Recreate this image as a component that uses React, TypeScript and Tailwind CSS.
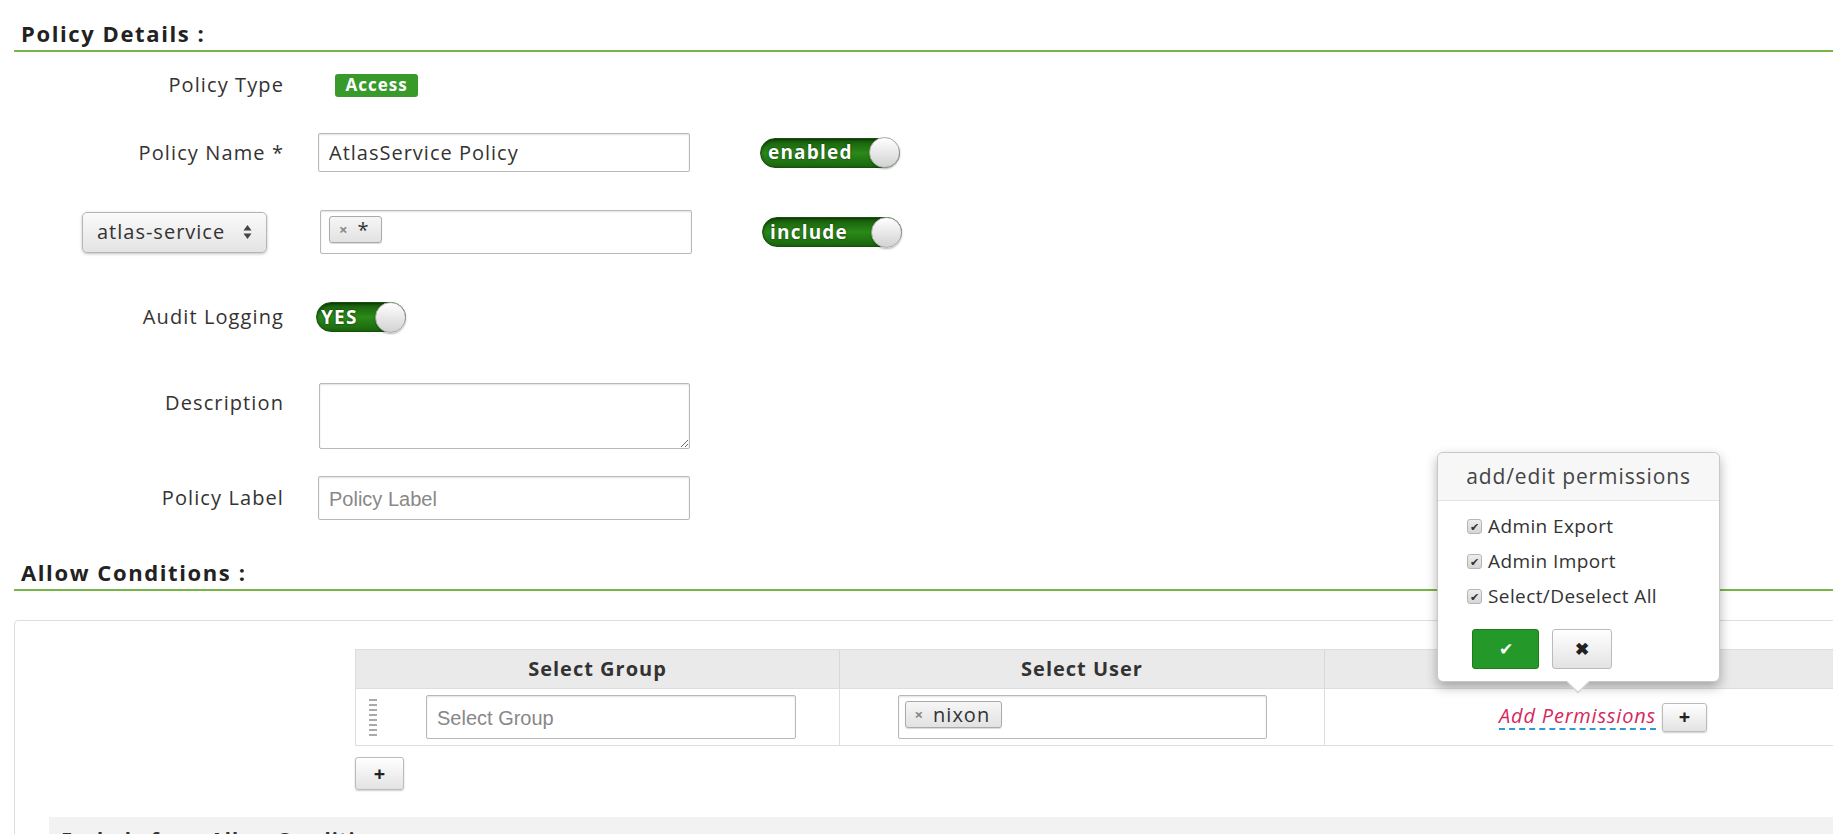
import React from "react";

const Toggle = ({ label, className }: { label: string; className: string }) => (
  <div
    className={`flex h-[30px] items-center justify-between rounded-full border border-[#15520b] bg-linear-to-b from-[#175a0b] via-[#2a8a18] to-[#1b660e] pl-[7px] shadow-[inset_0_1px_3px_rgba(0,0,0,0.5)] ${className}`}
  >
    <span className="text-[19px] font-bold leading-none tracking-[1.2px] text-white [text-shadow:0_0_2px_rgba(0,0,0,0.7)]">
      {label}
    </span>
    <span className="-mr-px h-[31px] w-[31px] rounded-full border border-[#a9a9a9] bg-linear-to-b from-white to-[#d2d2d2] shadow-[0_1px_2px_rgba(0,0,0,0.3)]" />
  </div>
);

const Tag = ({ text }: { text: string }) => (
  <span className="inline-flex h-[27px] items-center gap-[9px] rounded-[3px] border border-[#aaa] bg-linear-to-b from-[#f6f6f6] to-[#e2e2e2] pl-[9px] pr-[11px] text-[20px] leading-none tracking-[1px] text-[#333] shadow-[0_1px_1px_rgba(0,0,0,0.15)]">
    <span className="text-[15px] font-bold text-[#888]">×</span>
    {text}
  </span>
);

const PlusButton = ({ className }: { className: string }) => (
  <button
    className={`flex items-center justify-center rounded-[3px] border border-[#bbb] bg-linear-to-b from-white to-[#e3e3e3] text-[20px] font-bold leading-none text-[#222] shadow-[0_1px_2px_rgba(0,0,0,0.2)] ${className}`}
  >
    +
  </button>
);

const Check = () => (
  <span className="flex h-[15px] w-[15px] shrink-0 items-center justify-center rounded-[3px] border border-[#b5b5b5] bg-linear-to-b from-[#eee] to-[#d5d5d5] text-[11px] leading-none text-[#333]">
    ✔
  </span>
);

const Label = ({ children }: { children: React.ReactNode }) => (
  <div className="w-[284px] shrink-0 text-right text-[20px] leading-[28px] tracking-[1.1px] text-[#333]">
    {children}
  </div>
);

const SectionTitle = ({ children, className }: { children: React.ReactNode; className: string }) => (
  <div
    className={`ml-[14px] h-[52px] border-b-2 border-[#78b547] pl-[7px] pt-[19px] text-[22px] font-bold leading-[28px] tracking-[1.6px] text-[#222] ${className}`}
  >
    {children}
  </div>
);

const inputCls =
  "rounded-[2px] border border-[#b9b9b9] bg-white px-[10px] text-[20px] tracking-[1px] text-[#333] shadow-[inset_0_1px_2px_rgba(0,0,0,0.12)] outline-none placeholder:font-['Liberation_Sans',sans-serif] placeholder:tracking-normal placeholder:text-[#888]";

export default function App() {
  return (
    <div className="relative h-[834px] w-[1833px] overflow-hidden bg-white font-['Open_Sans','Noto_Sans',sans-serif] text-[#333]">
      <SectionTitle className="mt-0">Policy Details :</SectionTitle>

      {/* Policy Type */}
      <div className="mt-[22px] flex h-[22px] items-center">
        <Label>Policy Type</Label>
        <span className="ml-[51px] flex h-[23px] w-[83px] items-center justify-center rounded-[3px] bg-[#379a2b] text-[17px] font-bold tracking-[1px] text-white">
          Access
        </span>
      </div>

      {/* Policy Name */}
      <div className="mt-[37px] flex h-[39px] items-center">
        <Label>Policy Name *</Label>
        <input readOnly value="AtlasService Policy" className={`ml-[34px] h-[39px] w-[372px] ${inputCls}`} />
        <Toggle label="enabled" className="ml-[70px] w-[140px]" />
      </div>

      {/* Service select */}
      <div className="mt-[38px] flex h-[44px] items-center">
        <div className="flex w-[284px] shrink-0 justify-end pr-[17px]">
          <div className="flex h-[41px] w-[185px] items-center justify-between rounded-[5px] border border-[#b5b5b5] bg-linear-to-b from-[#fafafa] to-[#e4e4e4] pl-[14px] pr-[14px] text-[20px] tracking-[1px] text-[#333] shadow-[0_1px_3px_rgba(0,0,0,0.25)]">
            atlas-service
            <svg width="9" height="16" viewBox="0 0 9 16">
              <path d="M4.5 1 L8.5 6.5 L0.5 6.5 Z" fill="#444" />
              <path d="M4.5 15 L8.5 9.5 L0.5 9.5 Z" fill="#444" />
            </svg>
          </div>
        </div>
        <div className="ml-[36px] flex h-[44px] w-[372px] items-start rounded-[2px] border border-[#b9b9b9] bg-white pl-[8px] pt-[5px] shadow-[inset_0_1px_2px_rgba(0,0,0,0.12)]">
          <Tag text="*" />
        </div>
        <Toggle label="include" className="ml-[70px] w-[140px]" />
      </div>

      {/* Audit Logging */}
      <div className="mt-[48px] flex h-[30px] items-center">
        <Label>Audit Logging</Label>
        <Toggle label="YES" className="ml-[32px] w-[90px] !pl-[4px]" />
      </div>

      {/* Description */}
      <div className="mt-[51px] flex h-[66px] items-start">
        <div className="pt-[6px]">
          <Label>Description</Label>
        </div>
        <textarea readOnly className={`ml-[35px] h-[66px] w-[371px] resize ${inputCls}`} />
      </div>

      {/* Policy Label */}
      <div className="mt-[27px] flex h-[44px] items-center">
        <Label>Policy Label</Label>
        <input readOnly placeholder="Policy Label" className={`ml-[34px] h-[44px] w-[372px] ${inputCls}`} />
      </div>

      <SectionTitle className="mt-[19px]">Allow Conditions :</SectionTitle>

      {/* Allow conditions panel */}
      <div className="ml-[14px] mt-[29px] w-[1900px] rounded-[4px] border border-[#ddd] pb-[40px] pl-[340px] pt-[28px]">
        <div className="w-[1525px] border-b border-l border-t border-[#ddd]">
          <div className="grid h-[38px] grid-cols-[484px_485px_556px] bg-[#eaeaea] text-[20px] font-bold tracking-[1px] text-[#333]">
            <div className="flex items-center justify-center border-r border-[#d8d8d8]">Select Group</div>
            <div className="flex items-center justify-center border-r border-[#d8d8d8]">Select User</div>
            <div />
          </div>
          <div className="grid h-[57px] grid-cols-[484px_485px_556px] border-t border-[#ddd]">
            <div className="flex items-center border-r border-[#ddd] pl-[13px]">
              <div className="flex flex-col gap-[3px]">
                {[0, 1, 2, 3, 4, 5, 6, 7].map((i) => (
                  <span key={i} className="h-[2px] w-[8px] bg-[#aaa]" />
                ))}
              </div>
              <input readOnly placeholder="Select Group" className={`ml-[49px] h-[44px] w-[370px] ${inputCls}`} />
            </div>
            <div className="flex items-center justify-center border-r border-[#ddd]">
              <div className="flex h-[44px] w-[369px] items-start rounded-[2px] border border-[#b9b9b9] bg-white pl-[6px] pt-[5px] shadow-[inset_0_1px_2px_rgba(0,0,0,0.12)]">
                <Tag text="nixon" />
              </div>
            </div>
            <div className="flex items-center justify-center gap-[6px]">
              <span className="border-b-2 border-dashed border-[#2d9ad8] text-[20px] italic leading-[24px] tracking-[0.8px] text-[#d6285c]">
                Add Permissions
              </span>
              <PlusButton className="h-[29px] w-[45px]" />
            </div>
          </div>
        </div>

        <PlusButton className="mt-[11px] h-[33px] w-[49px]" />

        <div className="-ml-[306px] mt-[27px] h-[40px] bg-[#f2f2f2] pl-[12px] pt-[8px] text-[20px] font-bold tracking-[1px] text-[#333]">
          Exclude from Allow Conditions :
        </div>
      </div>

      {/* add/edit permissions popover */}
      <div className="absolute left-[1437px] top-[452px] w-[283px] rounded-[6px] border border-[#c8c8c8] bg-white shadow-[0_5px_12px_rgba(0,0,0,0.3)]">
        <div className="flex h-[48px] items-center justify-center rounded-t-[6px] border-b border-[#e3e3e3] bg-[#f7f7f7] text-[21px] tracking-[0.9px] text-[#444]">
          add/edit permissions
        </div>
        <div className="pl-[29px] pt-[8px]">
          {["Admin Export", "Admin Import", "Select/Deselect All"].map((t) => (
            <div key={t} className="flex h-[35px] items-center gap-[6px] text-[19px] tracking-[0.4px] text-[#333]">
              <Check />
              {t}
            </div>
          ))}
        </div>
        <div className="flex gap-[13px] pb-[12px] pl-[34px] pt-[15px]">
          <button className="flex h-[40px] w-[67px] items-center justify-center rounded-[3px] border border-[#1b7d1b] bg-[#24992a] text-[17px] text-white">
            ✔
          </button>
          <button className="flex h-[40px] w-[60px] items-center justify-center rounded-[3px] border border-[#bbb] bg-linear-to-b from-white to-[#e3e3e3] text-[17px] font-bold text-[#222]">
            ✖
          </button>
        </div>
        <span className="absolute bottom-[-9px] left-[132px] h-[16px] w-[16px] rotate-45 border-b border-r border-[#c8c8c8] bg-white" />
      </div>
    </div>
  );
}
